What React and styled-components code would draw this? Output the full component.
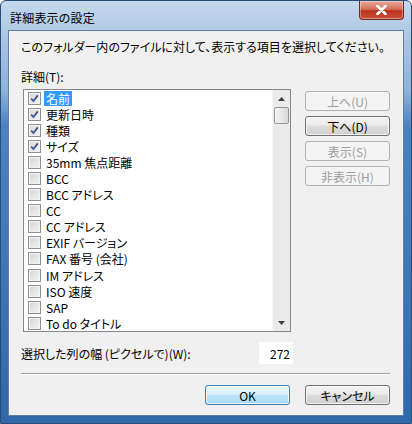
import React from "react";
import styled, { createGlobalStyle } from "styled-components";

const GlobalStyle = createGlobalStyle`
  html, body {
    margin: 0;
    padding: 0;
    background: #ffffff;
  }
  body {
    font-family: "Noto Sans CJK JP", "Noto Sans", sans-serif;
    font-size: 12px;
    font-feature-settings: "palt";
    color: #000;
  }
`;

const items = [
  { label: "名前", checked: true, selected: true },
  { label: "更新日時", checked: true },
  { label: "種類", checked: true },
  { label: "サイズ", checked: true },
  { label: "35mm 焦点距離" },
  { label: "BCC" },
  { label: "BCC アドレス" },
  { label: "CC" },
  { label: "CC アドレス" },
  { label: "EXIF バージョン" },
  { label: "FAX 番号 (会社)" },
  { label: "IM アドレス" },
  { label: "ISO 速度" },
  { label: "SAP" },
  { label: "To do タイトル" },
];

const sideButtons = [
  { label: "上へ(U)", disabled: true },
  { label: "下へ(D)" },
  { label: "表示(S)", disabled: true },
  { label: "非表示(H)", disabled: true },
];

const CheckMark = () => (
  <svg width="9" height="9" viewBox="0 0 9 9">
    <path
      d="M1.2 4.6 L3.4 7 L7.8 1.4"
      fill="none"
      stroke="#3a4f8f"
      strokeWidth="1.7"
    />
  </svg>
);

const Arrow = ({ down }) => (
  <svg width="7" height="4" viewBox="0 0 7 4">
    <path d={down ? "M0 0 L7 0 L3.5 4 Z" : "M0 4 L7 4 L3.5 0 Z"} fill="#3c3c3c" />
  </svg>
);

const CloseGlyph = () => (
  <svg width="11" height="10" viewBox="0 0 11 10">
    <path
      d="M1.5 1 L9.5 9 M9.5 1 L1.5 9"
      stroke="#ffffff"
      strokeWidth="2.6"
      strokeLinecap="round"
    />
  </svg>
);

export default function App() {
  return (
    <>
      <GlobalStyle />
      <Window>
        <TitleBar>
          <Title>詳細表示の設定</Title>
          <CloseButton>
            <CloseGlyph />
          </CloseButton>
        </TitleBar>
        <Client>
          <Description>
            このフォルダー内のファイルに対して、表示する項目を選択してください。
          </Description>
          <Caption>詳細(T):</Caption>
          <Body>
            <ListBox>
              <List>
                {items.map(item => (
                  <Row key={item.label}>
                    <Check>{item.checked && <CheckMark />}</Check>
                    <Label selected={item.selected}>{item.label}</Label>
                  </Row>
                ))}
              </List>
              <ScrollBar>
                <ScrollArrow>
                  <Arrow />
                </ScrollArrow>
                <Thumb />
                <Track />
                <ScrollArrow>
                  <Arrow down />
                </ScrollArrow>
              </ScrollBar>
            </ListBox>
            <SideButtons>
              {sideButtons.map(b => (
                <Button key={b.label} disabled={b.disabled}>
                  {b.label}
                </Button>
              ))}
            </SideButtons>
          </Body>
          <WidthRow>
            <span>選択した列の幅 (ピクセルで)(W):</span>
            <NumberBox>272</NumberBox>
          </WidthRow>
          <Separator />
          <Footer>
            <Button primary>OK</Button>
            <Button>キャンセル</Button>
          </Footer>
        </Client>
      </Window>
    </>
  );
}

const Window = styled.div`
  width: 412px;
  height: 424px;
  box-sizing: border-box;
  display: flex;
  flex-direction: column;
  padding: 0 7px 7px 7px;
  background: linear-gradient(
    180deg,
    #c3d8ec 0px,
    #a9c4e2 40px,
    #8eb2da 90px,
    #4b82bf 125px,
    #3c74b3 300px,
    #2f67a8 424px
  );
  border: 1px solid #2a4c78;
  border-radius: 6px 6px 0 0;
`;

const TitleBar = styled.div`
  height: 29px;
  display: flex;
  align-items: flex-start;
  justify-content: space-between;
`;

const Title = styled.div`
  margin-top: 8px;
  margin-left: 2px;
  font-size: 12px;
  color: #000;
  letter-spacing: 0.2px;
`;

const CloseButton = styled.div`
  width: 43px;
  height: 18px;
  margin-right: 0;
  display: flex;
  align-items: center;
  justify-content: center;
  border: 1px solid #6b2a24;
  border-top: none;
  border-radius: 0 0 4px 4px;
  background: linear-gradient(180deg, #e8a99a 0%, #d3705c 45%, #b8321f 55%, #c9503a 100%);
  box-shadow: inset 0 0 0 1px rgba(255, 255, 255, 0.35);
`;

const Client = styled.div`
  flex: 1;
  background: #f0f0f0;
  border: 1px solid #5e7fa6;
  display: flex;
  flex-direction: column;
  padding: 0 13px 0 12px;
`;

const Description = styled.div`
  margin-top: 8px;
  height: 16px;
  line-height: 16px;
`;

const Caption = styled.div`
  margin-top: 14px;
  height: 16px;
  line-height: 16px;
`;

const Body = styled.div`
  display: flex;
  align-items: flex-start;
  margin-top: 4px;
`;

const ListBox = styled.div`
  width: 269px;
  height: 243px;
  box-sizing: border-box;
  margin-left: 2px;
  border: 1px solid #828790;
  background: #fff;
  display: flex;
  overflow: hidden;
`;

const List = styled.div`
  flex: 1;
`;

const Row = styled.div`
  height: 16.1px;
  display: flex;
  align-items: center;
  padding-left: 4px;
`;

const Check = styled.div`
  width: 11px;
  height: 11px;
  border: 1px solid #8e8f8f;
  background: linear-gradient(135deg, #d6d6d6 0%, #f4f4f4 100%);
  box-shadow: inset 0 0 0 1px #f2f2f2;
  display: flex;
  align-items: center;
  justify-content: center;
  flex-shrink: 0;
`;

const Label = styled.span`
  margin-left: 3px;
  padding: 0 2px;
  line-height: 15px;
  background: ${p => (p.selected ? "#3399ff" : "transparent")};
  color: ${p => (p.selected ? "#ffffff" : "#000000")};
`;

const ScrollBar = styled.div`
  width: 17px;
  background: #eaeaea;
  border-left: 1px solid #f4f4f4;
  display: flex;
  flex-direction: column;
`;

const ScrollArrow = styled.div`
  height: 17px;
  display: flex;
  align-items: center;
  justify-content: center;
`;

const Thumb = styled.div`
  height: 15px;
  margin: 0 1px;
  border: 1px solid #979797;
  border-radius: 2px;
  background: linear-gradient(90deg, #f3f3f3 0%, #e8e8e8 50%, #d9d9d9 100%);
`;

const Track = styled.div`
  flex: 1;
`;

const SideButtons = styled.div`
  margin-left: 14px;
  margin-top: 2px;
  display: flex;
  flex-direction: column;
  gap: 5px;
`;

const Button = styled.div`
  width: 85px;
  height: 20px;
  box-sizing: border-box;
  display: flex;
  align-items: center;
  justify-content: center;
  border-radius: 3px;
  font-size: 12px;
  color: ${p => (p.disabled ? "#9d9d9d" : "#000")};
  border: 1px solid
    ${p => (p.primary ? "#3c7fb1" : p.disabled ? "#adb2b5" : "#707070")};
  background: ${p =>
    p.primary
      ? "linear-gradient(180deg, #eaf6fd 0%, #d9f0fc 45%, #bee6fd 50%, #a7d9f5 100%)"
      : p.disabled
      ? "#f4f4f4"
      : "linear-gradient(180deg, #f2f2f2 0%, #ebebeb 45%, #dddddd 50%, #cfcfcf 100%)"};
  box-shadow: ${p =>
    p.disabled ? "none" : "inset 0 0 0 1px rgba(255, 255, 255, 0.7)"};
`;

const WidthRow = styled.div`
  margin-top: 10px;
  display: flex;
  align-items: center;
  justify-content: space-between;
  width: 272px;
`;

const NumberBox = styled.div`
  width: 34px;
  height: 22px;
  box-sizing: border-box;
  background: #fff;
  display: flex;
  align-items: center;
  justify-content: flex-end;
  padding-right: 3px;
`;

const Separator = styled.div`
  margin-top: 9px;
  height: 0;
  border-top: 1px solid #a0a0a0;
  border-bottom: 1px solid #ffffff;
  width: 369px;
`;

const Footer = styled.div`
  margin-top: 10px;
  display: flex;
  justify-content: flex-end;
  gap: 15px;
`;
